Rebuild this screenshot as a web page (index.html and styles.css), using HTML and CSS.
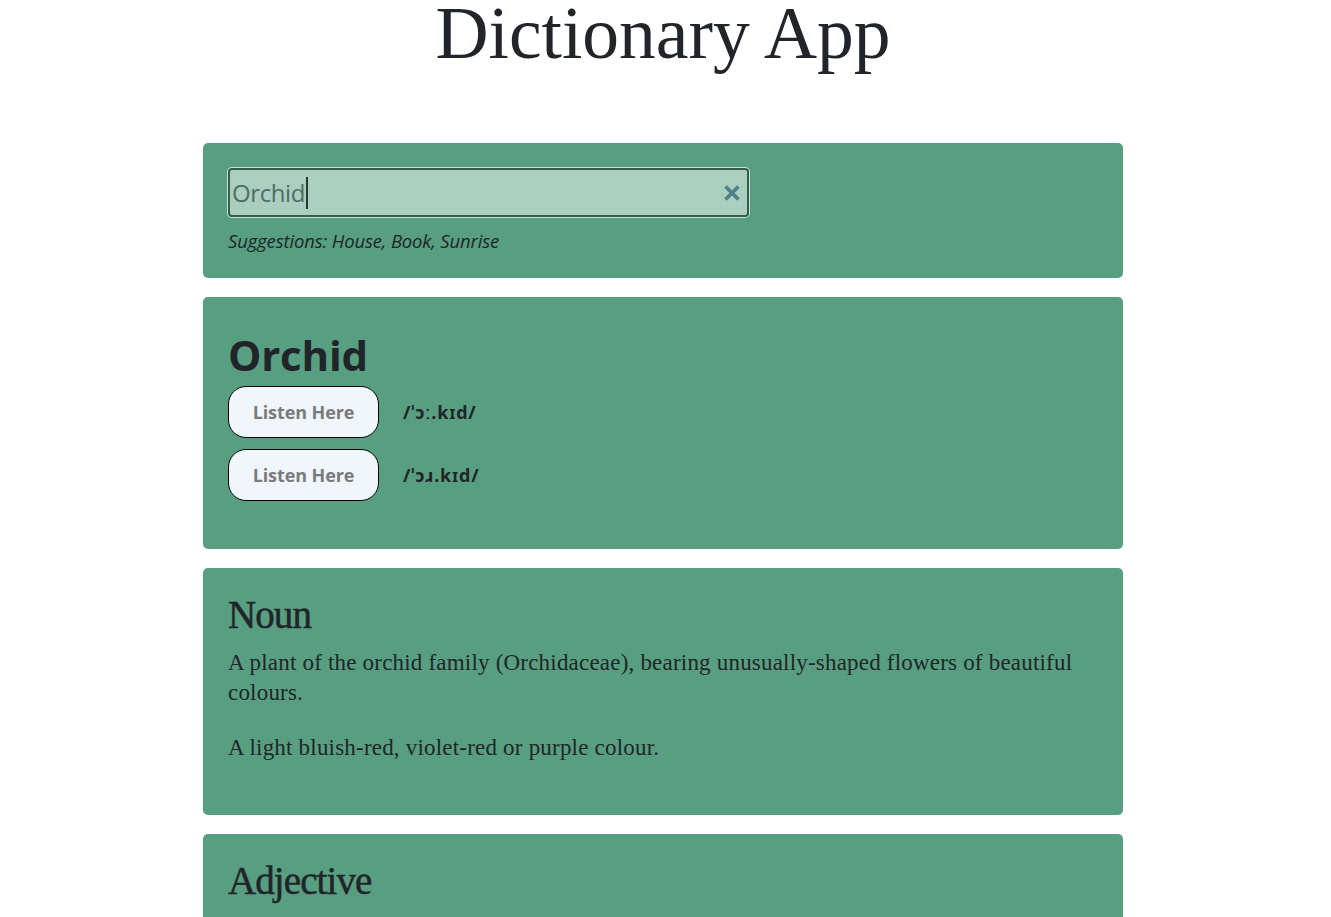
FILE: index.html
```html
<!DOCTYPE html>
<html lang="en">
<head>
<meta charset="utf-8">
<title>Dictionary App</title>
<link rel="stylesheet" href="styles.css">
</head>
<body>
<h1 class="title">Dictionary App</h1>
<main class="container">
  <section class="card search-card">
    <div class="search-box">
      <span class="search-text">Orchid</span><span class="caret"></span>
      <svg class="clear" width="18" height="18" viewBox="0 0 18 18" aria-hidden="true"><path d="M2.5 2.5 L15.5 15.5 M15.5 2.5 L2.5 15.5" stroke="#4d7f8c" stroke-width="3.6" stroke-linecap="butt"/></svg>
    </div>
    <p class="hint">Suggestions: House, Book, Sunrise</p>
  </section>

  <section class="card word-card">
    <h2 class="word">Orchid</h2>
    <div class="phon-row">
      <button class="listen">Listen Here</button>
      <span class="phon">/ˈɔː.kɪd/</span>
    </div>
    <div class="phon-row">
      <button class="listen">Listen Here</button>
      <span class="phon">/ˈɔɹ.kɪd/</span>
    </div>
  </section>

  <section class="card meaning-card">
    <h3 class="pos">Noun</h3>
    <p class="def">A plant of the orchid family (Orchidaceae), bearing unusually-shaped flowers of beautiful colours.</p>
    <p class="def">A light bluish-red, violet-red or purple colour.</p>
  </section>

  <section class="card meaning-card">
    <h3 class="pos">Adjective</h3>
    <p class="def">Of a light bluish-red, violet-red or purple colour.</p>
  </section>
</main>
</body>
</html>
```

FILE: styles.css
```css
* { box-sizing: border-box; }
html, body { margin: 0; padding: 0; background: #ffffff; }
body {
  padding-right: 5px;
  color: #212529;
  font-family: "Liberation Serif", "Times New Roman", serif;
}
.title {
  margin: 0;
  text-align: center;
  font-family: "Liberation Serif", serif;
  font-weight: 400;
  font-size: 73.5px;
  line-height: 68px;
  color: #212529;
}
.container {
  width: 920px;
  margin: 75px auto 0 auto;
  display: flex;
  flex-direction: column;
  gap: 19px;
}
.card {
  background: #579f80;
  border-radius: 5px;
  padding: 25px 25px;
}
.search-card { padding-bottom: 25px; }
.search-box {
  width: 521px;
  height: 49px;
  background: #aacfc0;
  border: 2px solid #355c4c;
  border-radius: 4px;
  box-shadow: 0 0 0 1px #c9e0d6;
  display: flex;
  align-items: center;
  padding: 0 6px 0 2px;
}
.search-text {
  font-family: "Open Sans", "Noto Sans", sans-serif;
  font-size: 24px;
  color: #4f6e60;
  letter-spacing: -0.4px;
}
.caret {
  display: inline-block;
  width: 2px;
  height: 32px;
  background: #2b3b33;
  margin-left: 1px;
}
.clear { margin-left: auto; }
.hint {
  margin: 11px 0 0 0;
  font-family: "Open Sans", "Noto Sans", sans-serif;
  font-style: italic;
  font-size: 18.5px;
  letter-spacing: -0.15px;
  color: #212529;
}
.word-card { padding-top: 32px; padding-bottom: 48px; }
.word {
  margin: 0 0 5px 0;
  font-family: "Open Sans", "Noto Sans", sans-serif;
  font-weight: 700;
  font-size: 42px;
  line-height: 52px;
  letter-spacing: -0.2px;
  color: #212529;
}
.phon-row {
  display: flex;
  align-items: center;
  gap: 24px;
  margin-bottom: 11px;
}
.phon-row:last-child { margin-bottom: 0; }
.listen {
  width: 151px;
  height: 52px;
  background: #eff7fd;
  border: 1px solid #000000;
  border-radius: 18px;
  font-family: "Open Sans", "Noto Sans", sans-serif;
  font-weight: 700;
  font-size: 18px;
  letter-spacing: -0.1px;
  color: #7a7a7a;
  padding: 0;
}
.phon {
  font-family: "Open Sans", "Noto Sans", sans-serif;
  font-weight: 700;
  font-size: 18px;
  letter-spacing: 0.8px;
  color: #212529;
}
.meaning-card { padding-top: 26px; padding-bottom: 52px; }
.pos {
  margin: 0 0 12px 0;
  font-family: "Liberation Serif", serif;
  font-weight: 400;
  font-size: 39px;
  line-height: 42px;
  letter-spacing: -0.9px;
  -webkit-text-stroke: 0.5px #212529;
  color: #212529;
}
.def {
  margin: 0 0 25px 0;
  font-family: "Liberation Serif", serif;
  font-size: 23px;
  line-height: 30px;
  letter-spacing: 0.2px;
  color: #212529;
}
.def:last-child { margin-bottom: 0; }
```
